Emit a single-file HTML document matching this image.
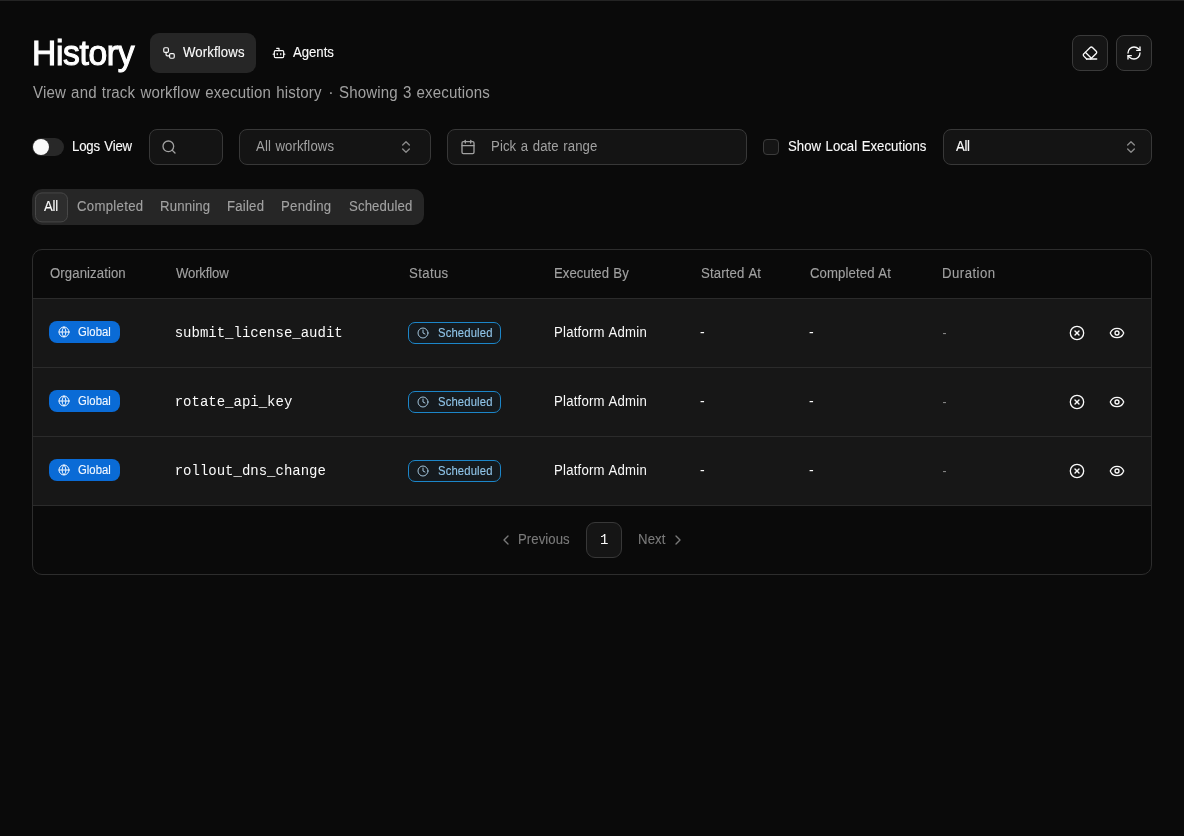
<!DOCTYPE html>
<html><head><meta charset="utf-8">
<style>
*{box-sizing:border-box;margin:0;padding:0}
html,body{width:1184px;height:836px;background:#0a0a0a;overflow:hidden}
body{font-family:"Liberation Sans",sans-serif;color:#fafafa;position:relative}
.abs{position:absolute}
.t{position:absolute;white-space:nowrap}
.ibtn{width:36px;height:36px;border:1px solid #3a3a3a;border-radius:8px;background:#151515}
.input{border:1px solid #383838;border-radius:8px;background:#141414;height:36px;top:129px}
svg{position:absolute;fill:none;stroke-linecap:round;stroke-linejoin:round;stroke-width:2}
.row{left:0;width:1118px;height:1px;background:#2b2b2b}
.gb{left:16px;width:71px;height:22px;border-radius:8px;background:#0a6bd6}
.sb{left:375px;width:93px;height:22px;border-radius:7px;border:1px solid #1c86c9;background:#151a1e}
</style></head><body>
<div class="abs" style="left:0;top:0;width:1184px;height:1px;background:#242424"></div>

<!-- header tabs -->
<div class="abs" style="left:150px;top:33px;width:106px;height:40px;background:#262626;border-radius:9px"></div>
<svg style="left:162px;top:46px" width="14" height="14" viewBox="0 0 24 24" stroke="#fafafa"><rect width="8" height="8" x="3" y="3" rx="2"/><path d="M7 11v4a2 2 0 0 0 2 2h4"/><rect width="8" height="8" x="13" y="13" rx="2"/></svg>
<svg style="left:272px;top:46px" width="14" height="14" viewBox="0 0 24 24" stroke="#fafafa"><path d="M12 8V4H8"/><rect width="16" height="12" x="4" y="8" rx="2"/><path d="M2 14h2"/><path d="M20 14h2"/><path d="M15 13v2"/><path d="M9 13v2"/></svg>

<!-- right buttons -->
<div class="abs ibtn" style="left:1072px;top:35px"></div>
<div class="abs ibtn" style="left:1116px;top:35px"></div>
<svg style="left:1082px;top:45px" width="16" height="16" viewBox="0 0 24 24" stroke="#fafafa"><path d="m7 21-4.300-4.300c-1-1-1-2.500 0-3.400l9.600-9.600c1-1 2.500-1 3.400 0l5.600 5.600c1 1 1 2.500 0 3.400L13 21"/><path d="M22 21H7"/><path d="m5 11 9 9"/></svg>
<svg style="left:1126px;top:45px" width="16" height="16" viewBox="0 0 24 24" stroke="#fafafa"><path d="M3 12a9 9 0 0 1 9-9 9.750 9.750 0 0 1 6.740 2.740L21 8"/><path d="M21 3v5h-5"/><path d="M21 12a9 9 0 0 1-9 9 9.750 9.750 0 0 1-6.740-2.740L3 16"/><path d="M8 16H3v5"/></svg>

<!-- filter row -->
<div class="abs" style="left:32px;top:138px;width:32px;height:18px;border-radius:9px;background:#282828"></div>
<div class="abs" style="left:33px;top:139px;width:16px;height:16px;border-radius:8px;background:#fafafa"></div>
<div class="abs input" style="left:149px;width:74px"></div>
<svg style="left:161px;top:139px" width="16" height="16" viewBox="0 0 24 24" stroke="#a1a1a1"><circle cx="11" cy="11" r="8"/><path d="m21 21-4.300-4.300"/></svg>
<div class="abs input" style="left:239px;width:192px"></div>
<svg style="left:398px;top:139px" width="16" height="16" viewBox="0 0 24 24" stroke="#8a8a8a"><path d="m7 15 5 5 5-5"/><path d="m7 9 5-5 5 5"/></svg>
<div class="abs input" style="left:447px;width:300px"></div>
<svg style="left:460px;top:139px" width="16" height="16" viewBox="0 0 24 24" stroke="#a1a1a1"><path d="M8 2v4"/><path d="M16 2v4"/><rect width="18" height="18" x="3" y="4" rx="2"/><path d="M3 10h18"/></svg>
<div class="abs" style="left:763px;top:139px;width:16px;height:16px;border:1px solid #3c3c3c;border-radius:4px;background:#151515"></div>
<div class="abs input" style="left:943px;width:209px"></div>
<svg style="left:1123px;top:139px" width="16" height="16" viewBox="0 0 24 24" stroke="#8a8a8a"><path d="m7 15 5 5 5-5"/><path d="m7 9 5-5 5 5"/></svg>

<!-- status tabs -->
<div class="abs" style="left:32px;top:189px;width:392px;height:36px;border-radius:10px;background:#262626"></div>
<div class="abs" style="left:35px;top:192px;width:33px;height:30px;border-radius:7px;background:#2d2d2d;border:1px solid #484848;transform:translateY(0.4px)"></div>

<!-- table -->
<div class="abs" style="left:32px;top:249px;width:1120px;height:326px;border:1px solid #2d2d2d;border-radius:10px;overflow:hidden">
  <div class="abs" style="left:0;top:48px;width:1118px;height:208px;background:#171717"></div>
  <div class="abs row" style="top:48px"></div>
  <div class="abs row" style="top:117px"></div>
  <div class="abs row" style="top:186px"></div>
  <div class="abs row" style="top:255px"></div>
  <div class="abs gb" style="top:71px"></div>
  <div class="abs gb" style="top:140px"></div>
  <div class="abs gb" style="top:209px"></div>
  <div class="abs sb" style="top:72px"></div>
  <div class="abs sb" style="top:141px"></div>
  <div class="abs sb" style="top:210px"></div>
</div>
<svg style="left:58px;top:326px" width="12" height="12" viewBox="0 0 24 24" stroke="#f3f8ff"><circle cx="12" cy="12" r="10"/><path d="M12 2a14.500 14.500 0 0 0 0 20 14.500 14.500 0 0 0 0-20"/><path d="M2 12h20"/></svg>
<svg style="left:417px;top:327px" width="12" height="12" viewBox="0 0 24 24" stroke="#a3c4da"><circle cx="12" cy="12" r="10"/><polyline points="12 6 12 12 16 14"/></svg>
<svg style="left:1069px;top:325px" width="16" height="16" viewBox="0 0 24 24" stroke="#fafafa"><circle cx="12" cy="12" r="10"/><path d="m15 9-6 6"/><path d="m9 9 6 6"/></svg>
<svg style="left:1109px;top:325px" width="16" height="16" viewBox="0 0 24 24" stroke="#fafafa"><path d="M2.062 12.348a1 1 0 0 1 0-.696 10.750 10.750 0 0 1 19.876 0 1 1 0 0 1 0 .696 10.750 10.750 0 0 1-19.876 0"/><circle cx="12" cy="12" r="3"/></svg>
<svg style="left:58px;top:395px" width="12" height="12" viewBox="0 0 24 24" stroke="#f3f8ff"><circle cx="12" cy="12" r="10"/><path d="M12 2a14.500 14.500 0 0 0 0 20 14.500 14.500 0 0 0 0-20"/><path d="M2 12h20"/></svg>
<svg style="left:417px;top:396px" width="12" height="12" viewBox="0 0 24 24" stroke="#a3c4da"><circle cx="12" cy="12" r="10"/><polyline points="12 6 12 12 16 14"/></svg>
<svg style="left:1069px;top:394px" width="16" height="16" viewBox="0 0 24 24" stroke="#fafafa"><circle cx="12" cy="12" r="10"/><path d="m15 9-6 6"/><path d="m9 9 6 6"/></svg>
<svg style="left:1109px;top:394px" width="16" height="16" viewBox="0 0 24 24" stroke="#fafafa"><path d="M2.062 12.348a1 1 0 0 1 0-.696 10.750 10.750 0 0 1 19.876 0 1 1 0 0 1 0 .696 10.750 10.750 0 0 1-19.876 0"/><circle cx="12" cy="12" r="3"/></svg>
<svg style="left:58px;top:464px" width="12" height="12" viewBox="0 0 24 24" stroke="#f3f8ff"><circle cx="12" cy="12" r="10"/><path d="M12 2a14.500 14.500 0 0 0 0 20 14.500 14.500 0 0 0 0-20"/><path d="M2 12h20"/></svg>
<svg style="left:417px;top:465px" width="12" height="12" viewBox="0 0 24 24" stroke="#a3c4da"><circle cx="12" cy="12" r="10"/><polyline points="12 6 12 12 16 14"/></svg>
<svg style="left:1069px;top:463px" width="16" height="16" viewBox="0 0 24 24" stroke="#fafafa"><circle cx="12" cy="12" r="10"/><path d="m15 9-6 6"/><path d="m9 9 6 6"/></svg>
<svg style="left:1109px;top:463px" width="16" height="16" viewBox="0 0 24 24" stroke="#fafafa"><path d="M2.062 12.348a1 1 0 0 1 0-.696 10.750 10.750 0 0 1 19.876 0 1 1 0 0 1 0 .696 10.750 10.750 0 0 1-19.876 0"/><circle cx="12" cy="12" r="3"/></svg>
<!-- pagination -->
<svg style="left:498px;top:532px" width="16" height="16" viewBox="0 0 24 24" stroke="#7a7a7a"><path d="m15 18-6-6 6-6"/></svg>
<div class="abs" style="left:586px;top:522px;width:36px;height:36px;border:1px solid #383838;border-radius:9px;background:#151515"></div>
<svg style="left:670px;top:532px" width="16" height="16" viewBox="0 0 24 24" stroke="#7a7a7a"><path d="m9 18 6-6-6-6"/></svg>

<div class="abs" style="left:0;top:0;width:1184px;height:836px;will-change:transform">
<div class="t" style="left:32.08px;top:35.01px;font-family:'Liberation Sans',sans-serif;font-size:35px;line-height:35px;letter-spacing:-0.365px;word-spacing:0.00px;color:#ffffff;-webkit-text-stroke:1.1px #fff;transform:scaleX(0.96);transform-origin:0 0;">History</div>
<div class="t" style="left:182.50px;top:45.01px;font-family:'Liberation Sans',sans-serif;font-size:14px;line-height:14px;letter-spacing:0.140px;word-spacing:0.00px;color:#fafafa;transform:scaleX(0.94);transform-origin:0 0;-webkit-text-stroke:0.12px #fafafa;">Workflows</div>
<div class="t" style="left:292.60px;top:45.01px;font-family:'Liberation Sans',sans-serif;font-size:14px;line-height:14px;letter-spacing:-0.015px;word-spacing:0.00px;color:#fafafa;transform:scaleX(0.94);transform-origin:0 0;-webkit-text-stroke:0.12px #fafafa;">Agents</div>
<div class="t" style="left:32.50px;top:85.01px;font-family:'Liberation Sans',sans-serif;font-size:16px;line-height:16px;letter-spacing:0.164px;word-spacing:0.90px;color:#a1a1a1;transform:scaleX(0.94);transform-origin:0 0;">View and track workflow execution history</div>
<div class="t" style="left:328.30px;top:85.01px;font-family:'Liberation Sans',sans-serif;font-size:16px;line-height:16px;letter-spacing:0.000px;word-spacing:0.00px;color:#a1a1a1;">·</div>
<div class="t" style="left:339.20px;top:85.01px;font-family:'Liberation Sans',sans-serif;font-size:16px;line-height:16px;letter-spacing:0.156px;word-spacing:0.90px;color:#a1a1a1;transform:scaleX(0.94);transform-origin:0 0;">Showing 3 executions</div>
<div class="t" style="left:71.76px;top:139.01px;font-family:'Liberation Sans',sans-serif;font-size:14px;line-height:14px;letter-spacing:-0.148px;word-spacing:0.79px;color:#fafafa;transform:scaleX(0.94);transform-origin:0 0;-webkit-text-stroke:0.12px #fafafa;">Logs View</div>
<div class="t" style="left:256.20px;top:139.01px;font-family:'Liberation Sans',sans-serif;font-size:14px;line-height:14px;letter-spacing:0.107px;word-spacing:0.79px;color:#a1a1a1;transform:scaleX(0.94);transform-origin:0 0;">All workflows</div>
<div class="t" style="left:491.46px;top:139.01px;font-family:'Liberation Sans',sans-serif;font-size:14px;line-height:14px;letter-spacing:0.113px;word-spacing:0.79px;color:#a1a1a1;transform:scaleX(0.94);transform-origin:0 0;">Pick a date range</div>
<div class="t" style="left:787.70px;top:139.01px;font-family:'Liberation Sans',sans-serif;font-size:14px;line-height:14px;letter-spacing:0.045px;word-spacing:0.79px;color:#fafafa;transform:scaleX(0.94);transform-origin:0 0;-webkit-text-stroke:0.12px #fafafa;">Show Local Executions</div>
<div class="t" style="left:955.60px;top:139.01px;font-family:'Liberation Sans',sans-serif;font-size:14px;line-height:14px;letter-spacing:-0.384px;word-spacing:0.00px;color:#fafafa;transform:scaleX(0.94);transform-origin:0 0;-webkit-text-stroke:0.12px #fafafa;">All</div>
<div class="t" style="left:44.00px;top:199.01px;font-family:'Liberation Sans',sans-serif;font-size:14px;line-height:14px;letter-spacing:-0.277px;word-spacing:0.00px;color:#fafafa;transform:scaleX(0.94);transform-origin:0 0;-webkit-text-stroke:0.12px #fafafa;">All</div>
<div class="t" style="left:76.60px;top:199.01px;font-family:'Liberation Sans',sans-serif;font-size:14px;line-height:14px;letter-spacing:0.332px;word-spacing:0.00px;color:#a1a1a1;transform:scaleX(0.94);transform-origin:0 0;-webkit-text-stroke:0.12px #a1a1a1;">Completed</div>
<div class="t" style="left:160.06px;top:199.01px;font-family:'Liberation Sans',sans-serif;font-size:14px;line-height:14px;letter-spacing:0.205px;word-spacing:0.00px;color:#a1a1a1;transform:scaleX(0.94);transform-origin:0 0;-webkit-text-stroke:0.12px #a1a1a1;">Running</div>
<div class="t" style="left:227.06px;top:199.01px;font-family:'Liberation Sans',sans-serif;font-size:14px;line-height:14px;letter-spacing:0.242px;word-spacing:0.00px;color:#a1a1a1;transform:scaleX(0.94);transform-origin:0 0;-webkit-text-stroke:0.12px #a1a1a1;">Failed</div>
<div class="t" style="left:280.86px;top:199.01px;font-family:'Liberation Sans',sans-serif;font-size:14px;line-height:14px;letter-spacing:0.316px;word-spacing:0.00px;color:#a1a1a1;transform:scaleX(0.94);transform-origin:0 0;-webkit-text-stroke:0.12px #a1a1a1;">Pending</div>
<div class="t" style="left:348.80px;top:199.01px;font-family:'Liberation Sans',sans-serif;font-size:14px;line-height:14px;letter-spacing:0.152px;word-spacing:0.00px;color:#a1a1a1;transform:scaleX(0.94);transform-origin:0 0;-webkit-text-stroke:0.12px #a1a1a1;">Scheduled</div>
<div class="t" style="left:49.50px;top:266.01px;font-family:'Liberation Sans',sans-serif;font-size:14px;line-height:14px;letter-spacing:0.099px;word-spacing:0.00px;color:#a1a1a1;transform:scaleX(0.94);transform-origin:0 0;-webkit-text-stroke:0.12px #a1a1a1;">Organization</div>
<div class="t" style="left:175.50px;top:266.01px;font-family:'Liberation Sans',sans-serif;font-size:14px;line-height:14px;letter-spacing:-0.183px;word-spacing:0.00px;color:#a1a1a1;transform:scaleX(0.94);transform-origin:0 0;-webkit-text-stroke:0.12px #a1a1a1;">Workflow</div>
<div class="t" style="left:408.90px;top:266.01px;font-family:'Liberation Sans',sans-serif;font-size:14px;line-height:14px;letter-spacing:0.403px;word-spacing:0.00px;color:#a1a1a1;transform:scaleX(0.94);transform-origin:0 0;-webkit-text-stroke:0.12px #a1a1a1;">Status</div>
<div class="t" style="left:554.06px;top:266.01px;font-family:'Liberation Sans',sans-serif;font-size:14px;line-height:14px;letter-spacing:0.012px;word-spacing:0.79px;color:#a1a1a1;transform:scaleX(0.94);transform-origin:0 0;-webkit-text-stroke:0.12px #a1a1a1;">Executed By</div>
<div class="t" style="left:700.80px;top:266.01px;font-family:'Liberation Sans',sans-serif;font-size:14px;line-height:14px;letter-spacing:0.170px;word-spacing:0.79px;color:#a1a1a1;transform:scaleX(0.94);transform-origin:0 0;-webkit-text-stroke:0.12px #a1a1a1;">Started At</div>
<div class="t" style="left:809.70px;top:266.01px;font-family:'Liberation Sans',sans-serif;font-size:14px;line-height:14px;letter-spacing:0.109px;word-spacing:0.79px;color:#a1a1a1;transform:scaleX(0.94);transform-origin:0 0;-webkit-text-stroke:0.12px #a1a1a1;">Completed At</div>
<div class="t" style="left:942.26px;top:266.01px;font-family:'Liberation Sans',sans-serif;font-size:14px;line-height:14px;letter-spacing:0.507px;word-spacing:0.00px;color:#a1a1a1;transform:scaleX(0.94);transform-origin:0 0;-webkit-text-stroke:0.12px #a1a1a1;">Duration</div>
<div class="t" style="left:517.86px;top:532.01px;font-family:'Liberation Sans',sans-serif;font-size:14px;line-height:14px;letter-spacing:0.067px;word-spacing:0.00px;color:#7a7a7a;transform:scaleX(0.94);transform-origin:0 0;-webkit-text-stroke:0.12px #7a7a7a;">Previous</div>
<div class="t" style="left:637.66px;top:532.01px;font-family:'Liberation Sans',sans-serif;font-size:14px;line-height:14px;letter-spacing:0.134px;word-spacing:0.00px;color:#7a7a7a;transform:scaleX(0.94);transform-origin:0 0;-webkit-text-stroke:0.12px #7a7a7a;">Next</div>
<div class="t" style="left:600.00px;top:533.00px;font-family:'Liberation Mono',monospace;font-size:14px;line-height:14px;letter-spacing:0.000px;word-spacing:0.00px;color:#fafafa;">1</div>
<div class="t" style="left:77.80px;top:326.01px;font-family:'Liberation Sans',sans-serif;font-size:12px;line-height:12px;letter-spacing:0.047px;word-spacing:0.00px;color:#f3f8ff;transform:scaleX(0.94);transform-origin:0 0;-webkit-text-stroke:0.12px #f3f8ff;">Global</div>
<div class="t" style="left:174.70px;top:326.00px;font-family:'Liberation Mono',monospace;font-size:14px;line-height:14px;letter-spacing:0.000px;word-spacing:0.00px;color:#fafafa;">submit_license_audit</div>
<div class="t" style="left:437.60px;top:327.01px;font-family:'Liberation Sans',sans-serif;font-size:12px;line-height:12px;letter-spacing:0.149px;word-spacing:0.00px;color:#8fc4e8;transform:scaleX(0.94);transform-origin:0 0;-webkit-text-stroke:0.12px #8fc4e8;">Scheduled</div>
<div class="t" style="left:553.96px;top:325.01px;font-family:'Liberation Sans',sans-serif;font-size:14px;line-height:14px;letter-spacing:0.228px;word-spacing:0.79px;color:#fafafa;transform:scaleX(0.94);transform-origin:0 0;">Platform Admin</div>
<div class="t" style="left:700.00px;top:325.01px;font-family:'Liberation Sans',sans-serif;font-size:14px;line-height:14px;letter-spacing:0.000px;word-spacing:0.00px;color:#fafafa;">-</div>
<div class="t" style="left:809.00px;top:325.01px;font-family:'Liberation Sans',sans-serif;font-size:14px;line-height:14px;letter-spacing:0.000px;word-spacing:0.00px;color:#fafafa;">-</div>
<div class="t" style="left:942.40px;top:327.01px;font-family:'Liberation Sans',sans-serif;font-size:12px;line-height:12px;letter-spacing:0.000px;word-spacing:0.00px;color:#8f8f8f;">-</div>
<div class="t" style="left:77.80px;top:395.01px;font-family:'Liberation Sans',sans-serif;font-size:12px;line-height:12px;letter-spacing:0.047px;word-spacing:0.00px;color:#f3f8ff;transform:scaleX(0.94);transform-origin:0 0;-webkit-text-stroke:0.12px #f3f8ff;">Global</div>
<div class="t" style="left:174.70px;top:395.00px;font-family:'Liberation Mono',monospace;font-size:14px;line-height:14px;letter-spacing:0.000px;word-spacing:0.00px;color:#fafafa;">rotate_api_key</div>
<div class="t" style="left:437.60px;top:396.01px;font-family:'Liberation Sans',sans-serif;font-size:12px;line-height:12px;letter-spacing:0.149px;word-spacing:0.00px;color:#8fc4e8;transform:scaleX(0.94);transform-origin:0 0;-webkit-text-stroke:0.12px #8fc4e8;">Scheduled</div>
<div class="t" style="left:553.96px;top:394.01px;font-family:'Liberation Sans',sans-serif;font-size:14px;line-height:14px;letter-spacing:0.228px;word-spacing:0.79px;color:#fafafa;transform:scaleX(0.94);transform-origin:0 0;">Platform Admin</div>
<div class="t" style="left:700.00px;top:394.01px;font-family:'Liberation Sans',sans-serif;font-size:14px;line-height:14px;letter-spacing:0.000px;word-spacing:0.00px;color:#fafafa;">-</div>
<div class="t" style="left:809.00px;top:394.01px;font-family:'Liberation Sans',sans-serif;font-size:14px;line-height:14px;letter-spacing:0.000px;word-spacing:0.00px;color:#fafafa;">-</div>
<div class="t" style="left:942.40px;top:396.01px;font-family:'Liberation Sans',sans-serif;font-size:12px;line-height:12px;letter-spacing:0.000px;word-spacing:0.00px;color:#8f8f8f;">-</div>
<div class="t" style="left:77.80px;top:464.01px;font-family:'Liberation Sans',sans-serif;font-size:12px;line-height:12px;letter-spacing:0.047px;word-spacing:0.00px;color:#f3f8ff;transform:scaleX(0.94);transform-origin:0 0;-webkit-text-stroke:0.12px #f3f8ff;">Global</div>
<div class="t" style="left:174.70px;top:464.00px;font-family:'Liberation Mono',monospace;font-size:14px;line-height:14px;letter-spacing:0.000px;word-spacing:0.00px;color:#fafafa;">rollout_dns_change</div>
<div class="t" style="left:437.60px;top:465.01px;font-family:'Liberation Sans',sans-serif;font-size:12px;line-height:12px;letter-spacing:0.149px;word-spacing:0.00px;color:#8fc4e8;transform:scaleX(0.94);transform-origin:0 0;-webkit-text-stroke:0.12px #8fc4e8;">Scheduled</div>
<div class="t" style="left:553.96px;top:463.01px;font-family:'Liberation Sans',sans-serif;font-size:14px;line-height:14px;letter-spacing:0.228px;word-spacing:0.79px;color:#fafafa;transform:scaleX(0.94);transform-origin:0 0;">Platform Admin</div>
<div class="t" style="left:700.00px;top:463.01px;font-family:'Liberation Sans',sans-serif;font-size:14px;line-height:14px;letter-spacing:0.000px;word-spacing:0.00px;color:#fafafa;">-</div>
<div class="t" style="left:809.00px;top:463.01px;font-family:'Liberation Sans',sans-serif;font-size:14px;line-height:14px;letter-spacing:0.000px;word-spacing:0.00px;color:#fafafa;">-</div>
<div class="t" style="left:942.40px;top:465.01px;font-family:'Liberation Sans',sans-serif;font-size:12px;line-height:12px;letter-spacing:0.000px;word-spacing:0.00px;color:#8f8f8f;">-</div>
</div>
</body></html>
